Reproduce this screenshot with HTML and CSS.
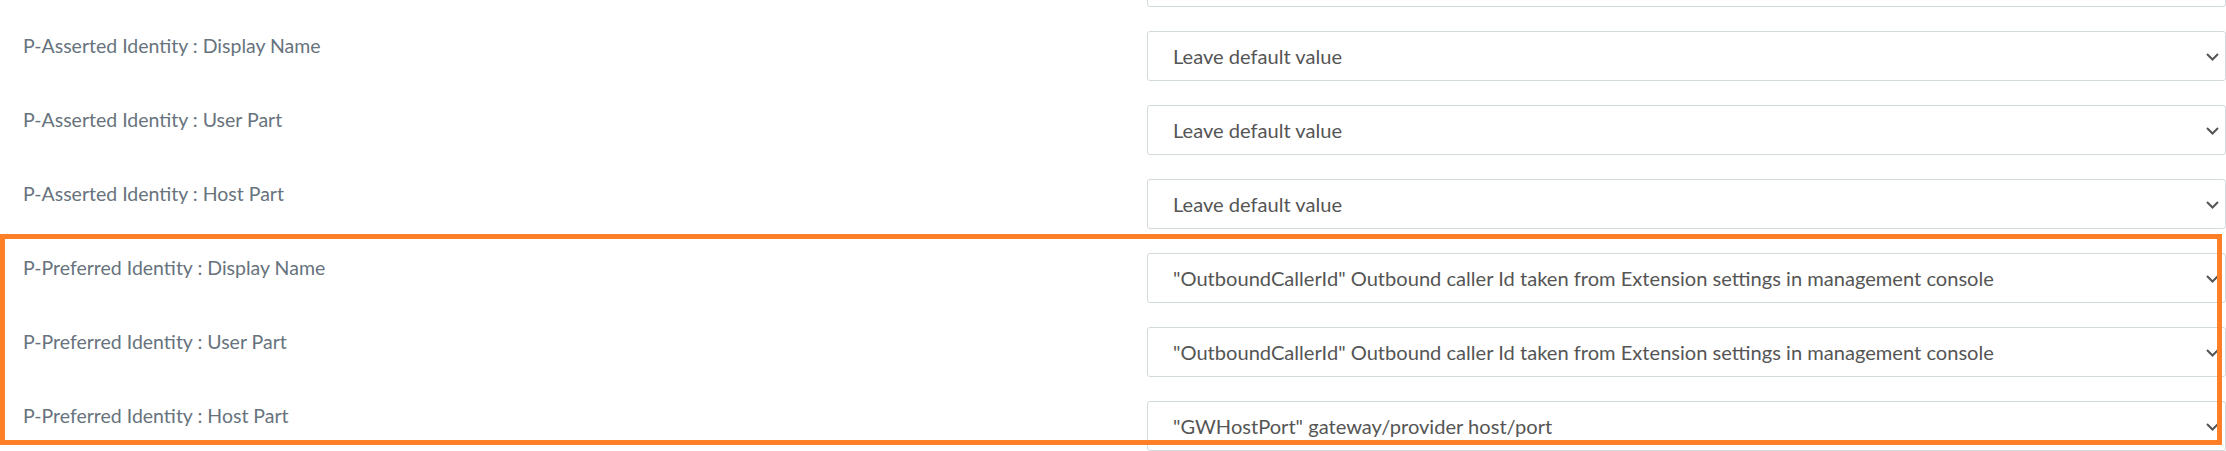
FILE: index.html
```html
<!DOCTYPE html>
<html>
<head>
<meta charset="utf-8">
<link rel="stylesheet" href="styles.css">
</head>
<body>
<div class="page">
  <div class="form">
    <div class="row">
      <div class="label"></div>
      <div class="select"><span class="value"></span><svg class="chev" width="13" height="8" viewBox="0 0 13 8"><path d="M1 1 L6.5 6.5 L12 1" fill="none" stroke="#555" stroke-width="2"/></svg></div>
    </div>
    <div class="row">
      <div class="label">P-Asserted Identity : Display Name</div>
      <div class="select"><span class="value">Leave default value</span><svg class="chev" width="13" height="8" viewBox="0 0 13 8"><path d="M1 1 L6.5 6.5 L12 1" fill="none" stroke="#555" stroke-width="2"/></svg></div>
    </div>
    <div class="row">
      <div class="label">P-Asserted Identity : User Part</div>
      <div class="select"><span class="value">Leave default value</span><svg class="chev" width="13" height="8" viewBox="0 0 13 8"><path d="M1 1 L6.5 6.5 L12 1" fill="none" stroke="#555" stroke-width="2"/></svg></div>
    </div>
    <div class="row">
      <div class="label">P-Asserted Identity : Host Part</div>
      <div class="select"><span class="value">Leave default value</span><svg class="chev" width="13" height="8" viewBox="0 0 13 8"><path d="M1 1 L6.5 6.5 L12 1" fill="none" stroke="#555" stroke-width="2"/></svg></div>
    </div>
    <div class="row">
      <div class="label">P-Preferred Identity : Display Name</div>
      <div class="select"><span class="value">"OutboundCallerId" Outbound caller Id taken from Extension settings in management console</span><svg class="chev" width="13" height="8" viewBox="0 0 13 8"><path d="M1 1 L6.5 6.5 L12 1" fill="none" stroke="#555" stroke-width="2"/></svg></div>
    </div>
    <div class="row">
      <div class="label">P-Preferred Identity : User Part</div>
      <div class="select"><span class="value">"OutboundCallerId" Outbound caller Id taken from Extension settings in management console</span><svg class="chev" width="13" height="8" viewBox="0 0 13 8"><path d="M1 1 L6.5 6.5 L12 1" fill="none" stroke="#555" stroke-width="2"/></svg></div>
    </div>
    <div class="row">
      <div class="label">P-Preferred Identity : Host Part</div>
      <div class="select"><span class="value">"GWHostPort" gateway/provider host/port</span><svg class="chev" width="13" height="8" viewBox="0 0 13 8"><path d="M1 1 L6.5 6.5 L12 1" fill="none" stroke="#555" stroke-width="2"/></svg></div>
    </div>
  </div>
  <div class="highlight"></div>
</div>
</body>
</html>
```

FILE: styles.css
```css
html, body {
  margin: 0;
  padding: 0;
  background: #ffffff;
  overflow: hidden;
}
body {
  font-family: Lato, "Open Sans", "Liberation Sans", sans-serif;
  font-size: 19.5px;
}
.page {
  position: relative;
  width: 2226px;
  height: 451px;
  overflow: hidden;
}
.form {
  margin-top: -43px;
  display: flex;
  flex-direction: column;
  gap: 24px;
}
.row {
  display: grid;
  grid-template-columns: 1147px 1079px;
  align-items: start;
}
.label {
  min-height: 23px;
  padding: 3px 0 0 23px;
  color: #67737d;
  line-height: 1.2;
}
.select {
  box-sizing: border-box;
  height: 50px;
  border: 1px solid #d3dadd;
  border-radius: 3px;
  background: #fff;
  display: flex;
  align-items: center;
  justify-content: space-between;
  padding: 0 6px 0 25px;
  color: #555555;
  font-size: 20.1px;
  line-height: 1.2;
}
.chev {
  display: block;
  margin-top: 2px;
}
.highlight {
  position: absolute;
  left: 0;
  top: 234px;
  width: 2222px;
  height: 211px;
  box-sizing: border-box;
  border: 5px solid #ff7f27;
  pointer-events: none;
}
```
